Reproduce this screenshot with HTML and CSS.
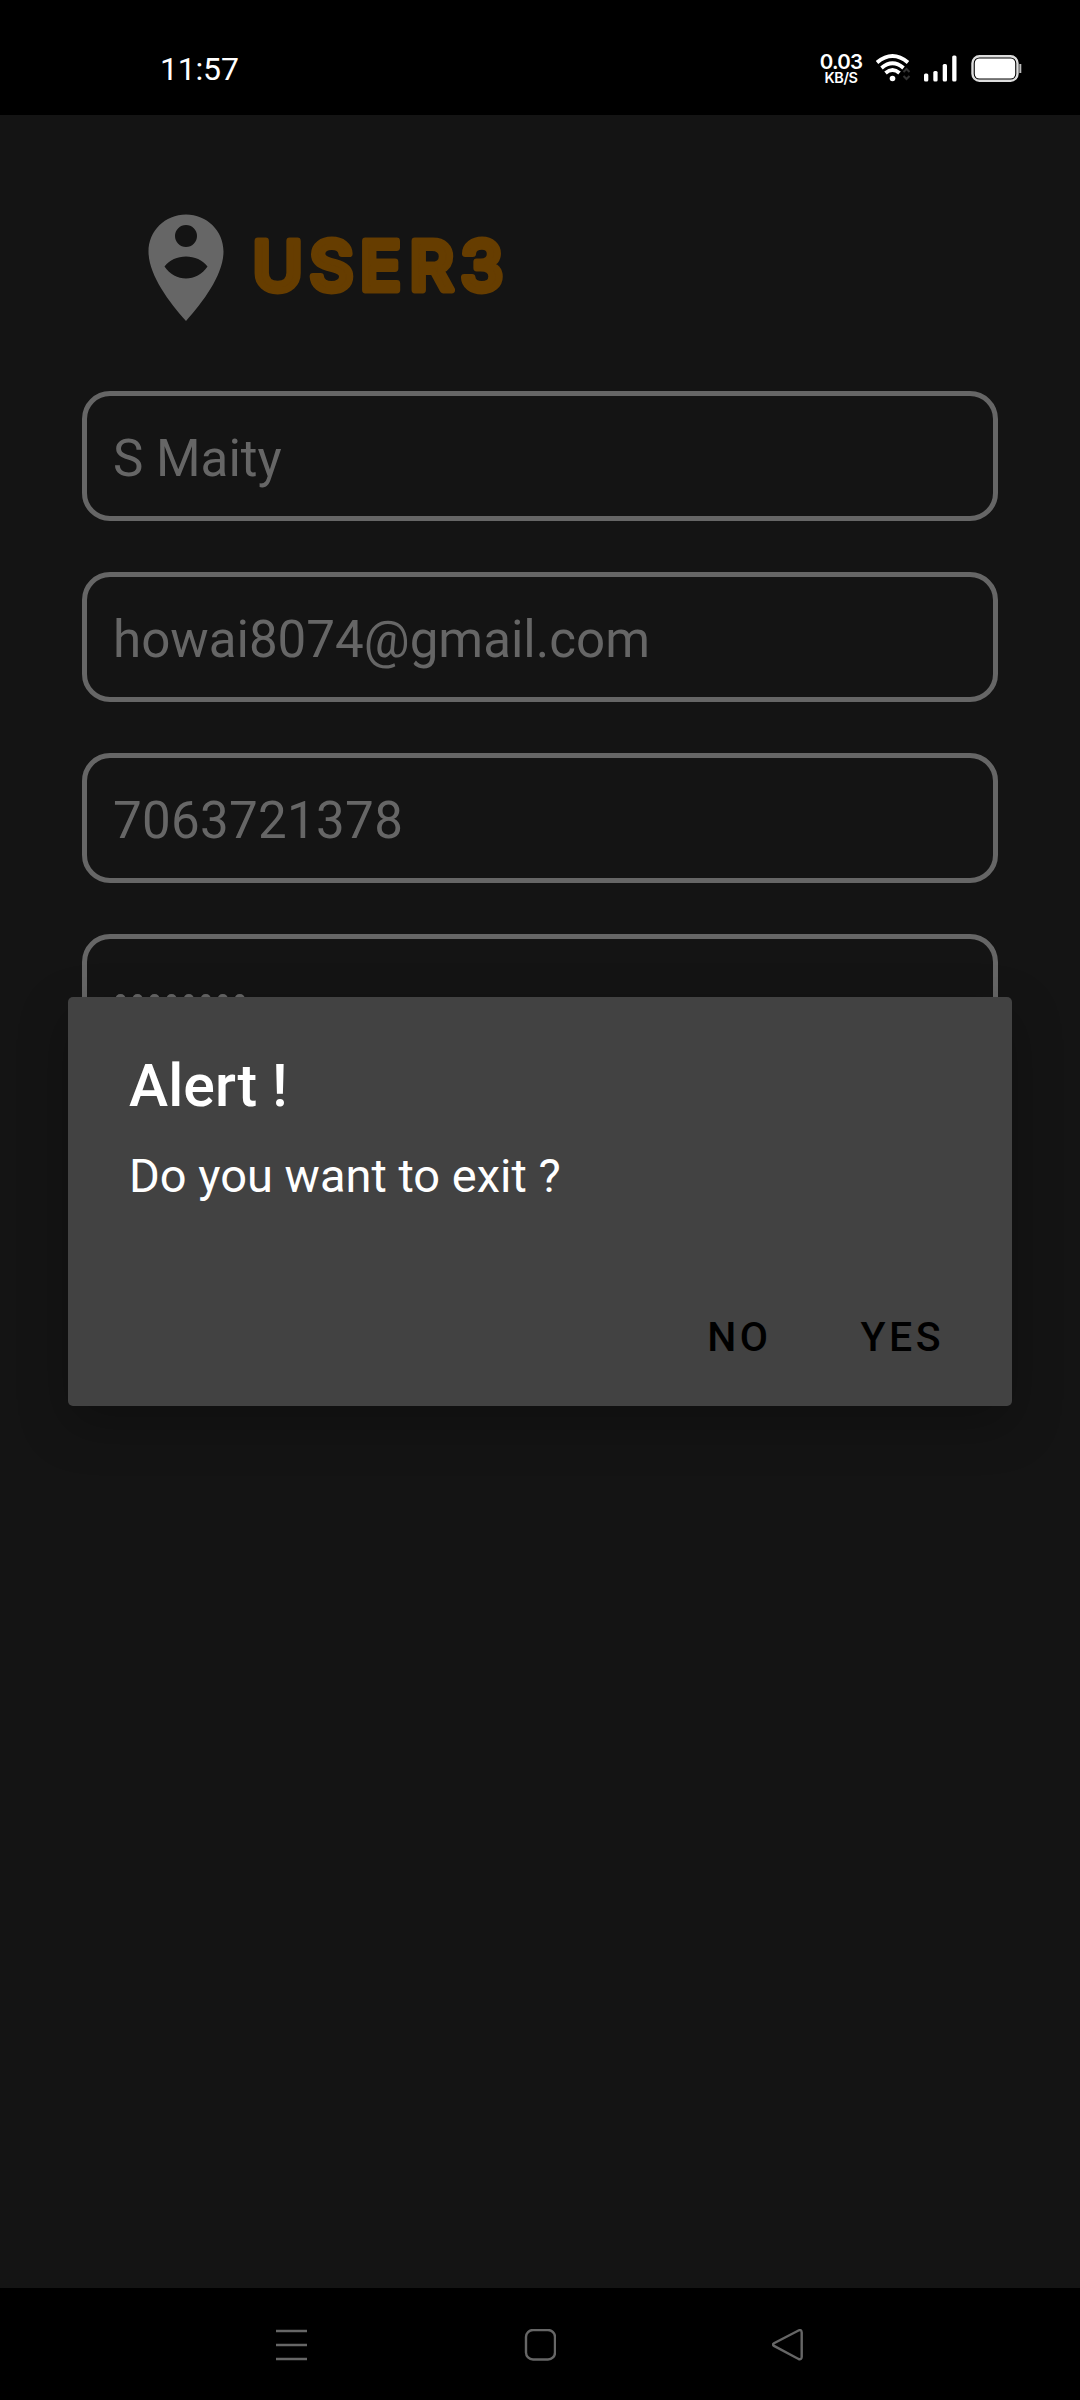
FILE: index.html
```html
<!DOCTYPE html>
<html lang="en">
<head>
<meta charset="utf-8">
<title>User profile</title>
<link rel="stylesheet" href="styles.css">
</head>
<body>
<div class="screen">
  <header class="status">
    <span class="clock">11:57</span>
    <div class="indicators">
      <div class="speed"><span class="rate">0.03</span><span class="unit">KB/S</span></div>
      <svg class="wifi" width="36" height="30" viewBox="0 0 36 30" fill="none" stroke="#fff" stroke-width="3.8">
        <path d="M1 9.500Q16.500 -3.500 32 9.500M5.500 15Q16.500 5.500 27.500 15M9.500 20Q16.500 14 23.500 20"/>
        <circle cx="16.500" cy="25.500" r="2.800" fill="#fff" stroke="none"/>
        <path d="M27.500 19l3-3 3 3M27.500 23l3 3 3-3" stroke="#333" stroke-width="2"/>
      </svg>
      <svg class="signal" width="34" height="30" viewBox="0 0 34 30" fill="#fff">
        <rect x="0" y="20.500" width="4.300" height="8" rx="1.500"/><rect x="9.300" y="18" width="4.300" height="10.500" rx="1.500"/><rect x="18.700" y="11" width="4.300" height="17.500" rx="1.500"/><rect x="28.200" y="2.500" width="4.300" height="26" rx="1.500"/>
      </svg>
      <svg class="battery" width="51" height="30" viewBox="0 0 51 30">
        <rect x="1.500" y="3.200" width="45" height="24.600" rx="7" fill="none" stroke="#ddd" stroke-width="2.400"/>
        <rect x="3.800" y="5.500" width="40.400" height="20" rx="4.500" fill="#fff"/>
        <path d="M48.300 11h2v9h-2z" fill="#bbb"/>
      </svg>
    </div>
  </header>
  <main class="content">
    <div class="brand">
      <svg width="76" height="108" viewBox="0 0 76 108">
        <path fill="#666" fill-rule="evenodd" d="M38 .500C17 .500.500 17 .500 37.500.500 60 20 87 38 107 56 87 75.500 60 75.500 37.500 75.500 17 59 .500 38 .500ZM38 11a11 11 0 1 1 0 22 11 11 0 0 1 0-22ZM16.500 52.500C26 39 50 39 59.500 52.500 49 68.500 27 68.500 16.500 52.500Z"/>
      </svg>
      <svg class="wordmark" width="280" height="90" viewBox="0 0 280 90">
        <text y="61.500" x="-1.500 55.500 106 155.500 206.500">USER3</text>
      </svg>
    </div>
    <div class="field">S Maity</div>
    <div class="field">howai8074@gmail.com</div>
    <div class="field phone">7063721378</div>
    <div class="field password">••••••••</div>
  </main>
  <nav class="nav">
    <svg width="32" height="32" viewBox="0 0 32 32"><path d="M0 2h31M0 16h31M0 30h31"/></svg>
    <svg width="32" height="32" viewBox="0 0 32 32"><rect x="2" y="1" width="29" height="29.500" rx="7"/></svg>
    <svg width="32" height="32" viewBox="0 0 32 32"><path d="M2 14.200Q0 15.500 2 16.900L26.500 30Q29.500 31 29.700 28V3.500Q29.500 0 26.500 1.500Z"/></svg>
  </nav>
  <section class="dialog" role="alertdialog">
    <h1>Alert !</h1>
    <p>Do you want to exit ?</p>
    <div class="actions"><span>NO</span><span>YES</span></div>
  </section>
</div>
</body>
</html>
```
FILE: styles.css
```css
* { box-sizing: border-box; }
body { margin: 0; background: #141414; font-family: Roboto, sans-serif; }
.screen { position: relative; width: 1080px; height: 2400px; display: flex; flex-direction: column; overflow: hidden; }
.status { height: 115px; background: #000; color: #fff; display: flex; justify-content: space-between; padding: 53px 58px 0 160px; }
.clock { font-size: 32px; line-height: 32px; letter-spacing: -.2px; }
.indicators { display: flex; align-items: flex-start; }
.speed { display: flex; flex-direction: column; align-items: center; width: 44px; margin-right: 13px; font-family: Inter, sans-serif; font-weight: 600; }
.rate { font-size: 20.5px; line-height: 18px; letter-spacing: -.8px; }
.unit { font-size: 14.5px; line-height: 14px; letter-spacing: -.4px; }
.wifi { margin-right: 12px; }
.signal { margin-right: 13px; }
.content { flex: 1; padding: 99px 82px 0; display: flex; flex-direction: column; gap: 51px; }
.brand { height: 126px; margin-left: 66px; display: flex; gap: 30px; align-items: flex-start; }
.wordmark { margin-top: 14px; overflow: visible; }
.wordmark text { font-family: Inter, sans-serif; font-weight: 550; font-size: 68px; fill: #663d00; stroke: #663d00; stroke-width: 6.8px; stroke-linejoin: round; }
.field { height: 130px; border: 5px solid #666; border-radius: 28px; padding-left: 26px; color: #666; font-size: 51.1px; line-height: 126px; white-space: nowrap; }
.phone { letter-spacing: .3px; }
.password { padding-left: 25px; letter-spacing: -.2px; }
.nav { height: 112px; background: #000; display: flex; justify-content: space-between; align-items: flex-start; padding: 41px 276px 0; }
.nav svg { fill: none; stroke: #666; stroke-width: 2.4; }
.dialog { position: absolute; left: 68px; top: 997px; width: 944px; height: 409px; border-radius: 5px; background: #424242; box-shadow: 0 18px 50px rgba(0,0,0,.25); color: #fff; padding: 54px 68px 29px 61px; display: flex; flex-direction: column; }
h1 { margin: 0; font-size: 59px; font-weight: 500; line-height: 70px; letter-spacing: .1px; }
p { margin: 27px 0 0; font-size: 47px; line-height: 56px; }
.actions { margin-top: auto; display: flex; justify-content: flex-end; gap: 89px; color: #000; font-size: 41px; font-weight: 480; line-height: 80px; letter-spacing: 3.5px; }
```
